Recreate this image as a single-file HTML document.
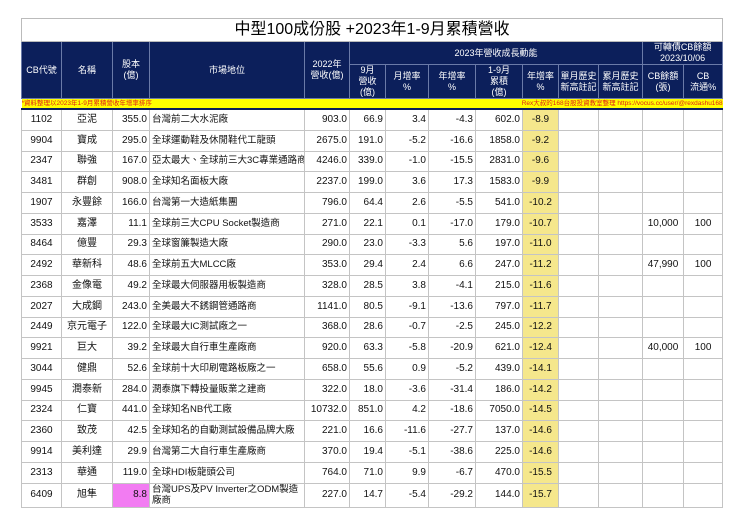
<!DOCTYPE html>
<html><head><meta charset="utf-8"><style>
body{margin:0;background:#fff;width:740px;height:523px;overflow:hidden;font-family:"Liberation Sans","Noto Sans CJK TC",sans-serif;}
table{position:absolute;left:21px;top:18px;border-collapse:collapse;table-layout:fixed;width:701px;}
td{padding:0;overflow:hidden;white-space:nowrap;vertical-align:middle;}
.t td{height:22px;border:1px solid #bbb;text-align:center;font-size:16px;line-height:18px;color:#000;}
.h td{background:#0c1f5b;color:#fff;text-align:center;font-size:9px;line-height:11px;border:1px solid #6a7aa8;}
.y td{background:#ffff00;height:9px;font-size:6.5px;line-height:9px;color:#e0201a;border:none;border-bottom:2px solid #0c1f5b;}
.d td{height:19.75px;border:1px solid #c4c4c4;font-size:10px;line-height:12px;color:#111;text-align:right;padding-right:2px;}
.d td.c{text-align:center;padding:0}
.d td.l{text-align:left;padding-left:2px;font-size:9.5px;}
.d td.hl{background:#f5e78c;text-align:center;padding:0}
</style></head><body>
<table>
<colgroup><col style="width:40px"><col style="width:51px"><col style="width:37px"><col style="width:155px"><col style="width:45px"><col style="width:36px"><col style="width:43px"><col style="width:47px"><col style="width:47px"><col style="width:36px"><col style="width:40px"><col style="width:44px"><col style="width:41px"><col style="width:39px"></colgroup>
<tr class="t"><td colspan="14">中型100成份股 +2023年1-9月累積營收</td></tr>
<tr class="h" style="height:23px"><td rowspan="2">CB代號</td><td rowspan="2">名稱</td><td rowspan="2">股本<br>(億)</td><td rowspan="2">市場地位</td><td rowspan="2">2022年<br>營收(億)</td><td colspan="7">2023年營收成長動能</td><td colspan="2">可轉債CB餘額<br>2023/10/06</td></tr>
<tr class="h" style="height:33px"><td>9月<br>營收<br>(億)</td><td>月增率<br>%</td><td>年增率<br>%</td><td>1-9月<br>累積<br>(億)</td><td>年增率<br>%</td><td>單月歷史<br>新高註記</td><td>累月歷史<br>新高註記</td><td>CB餘額<br>(張)</td><td>CB<br>流通%</td></tr>
<tr class="y"><td colspan="7" style="text-align:left">*資料整理以2023年1-9月累積營收年增率排序</td><td colspan="7" style="text-align:right">Rex大叔的168台股投資教室整理 https://vocus.cc/user/@rexdashu168</td></tr>
<tr class="d"><td class="c">1102</td><td class="c">亞泥</td><td>355.0</td><td class="l">台灣前二大水泥廠</td><td>903.0</td><td>66.9</td><td>3.4</td><td>-4.3</td><td>602.0</td><td class="hl">-8.9</td><td></td><td></td><td></td><td></td></tr>
<tr class="d"><td class="c">9904</td><td class="c">寶成</td><td>295.0</td><td class="l">全球運動鞋及休閒鞋代工龍頭</td><td>2675.0</td><td>191.0</td><td>-5.2</td><td>-16.6</td><td>1858.0</td><td class="hl">-9.2</td><td></td><td></td><td></td><td></td></tr>
<tr class="d"><td class="c">2347</td><td class="c">聯強</td><td>167.0</td><td class="l">亞太最大、全球前三大3C專業通路商</td><td>4246.0</td><td>339.0</td><td>-1.0</td><td>-15.5</td><td>2831.0</td><td class="hl">-9.6</td><td></td><td></td><td></td><td></td></tr>
<tr class="d"><td class="c">3481</td><td class="c">群創</td><td>908.0</td><td class="l">全球知名面板大廠</td><td>2237.0</td><td>199.0</td><td>3.6</td><td>17.3</td><td>1583.0</td><td class="hl">-9.9</td><td></td><td></td><td></td><td></td></tr>
<tr class="d"><td class="c">1907</td><td class="c">永豐餘</td><td>166.0</td><td class="l">台灣第一大造紙集團</td><td>796.0</td><td>64.4</td><td>2.6</td><td>-5.5</td><td>541.0</td><td class="hl">-10.2</td><td></td><td></td><td></td><td></td></tr>
<tr class="d"><td class="c">3533</td><td class="c">嘉澤</td><td>11.1</td><td class="l">全球前三大CPU Socket製造商</td><td>271.0</td><td>22.1</td><td>0.1</td><td>-17.0</td><td>179.0</td><td class="hl">-10.7</td><td></td><td></td><td class="c">10,000</td><td class="c">100</td></tr>
<tr class="d"><td class="c">8464</td><td class="c">億豐</td><td>29.3</td><td class="l">全球窗簾製造大廠</td><td>290.0</td><td>23.0</td><td>-3.3</td><td>5.6</td><td>197.0</td><td class="hl">-11.0</td><td></td><td></td><td></td><td></td></tr>
<tr class="d"><td class="c">2492</td><td class="c">華新科</td><td>48.6</td><td class="l">全球前五大MLCC廠</td><td>353.0</td><td>29.4</td><td>2.4</td><td>6.6</td><td>247.0</td><td class="hl">-11.2</td><td></td><td></td><td class="c">47,990</td><td class="c">100</td></tr>
<tr class="d"><td class="c">2368</td><td class="c">金像電</td><td>49.2</td><td class="l">全球最大伺服器用板製造商</td><td>328.0</td><td>28.5</td><td>3.8</td><td>-4.1</td><td>215.0</td><td class="hl">-11.6</td><td></td><td></td><td></td><td></td></tr>
<tr class="d"><td class="c">2027</td><td class="c">大成鋼</td><td>243.0</td><td class="l">全美最大不銹鋼管通路商</td><td>1141.0</td><td>80.5</td><td>-9.1</td><td>-13.6</td><td>797.0</td><td class="hl">-11.7</td><td></td><td></td><td></td><td></td></tr>
<tr class="d"><td class="c">2449</td><td class="c">京元電子</td><td>122.0</td><td class="l">全球最大IC測試廠之一</td><td>368.0</td><td>28.6</td><td>-0.7</td><td>-2.5</td><td>245.0</td><td class="hl">-12.2</td><td></td><td></td><td></td><td></td></tr>
<tr class="d"><td class="c">9921</td><td class="c">巨大</td><td>39.2</td><td class="l">全球最大自行車生產廠商</td><td>920.0</td><td>63.3</td><td>-5.8</td><td>-20.9</td><td>621.0</td><td class="hl">-12.4</td><td></td><td></td><td class="c">40,000</td><td class="c">100</td></tr>
<tr class="d"><td class="c">3044</td><td class="c">健鼎</td><td>52.6</td><td class="l">全球前十大印刷電路板廠之一</td><td>658.0</td><td>55.6</td><td>0.9</td><td>-5.2</td><td>439.0</td><td class="hl">-14.1</td><td></td><td></td><td></td><td></td></tr>
<tr class="d"><td class="c">9945</td><td class="c">潤泰新</td><td>284.0</td><td class="l">潤泰旗下轉投量販業之建商</td><td>322.0</td><td>18.0</td><td>-3.6</td><td>-31.4</td><td>186.0</td><td class="hl">-14.2</td><td></td><td></td><td></td><td></td></tr>
<tr class="d"><td class="c">2324</td><td class="c">仁寶</td><td>441.0</td><td class="l">全球知名NB代工廠</td><td>10732.0</td><td>851.0</td><td>4.2</td><td>-18.6</td><td>7050.0</td><td class="hl">-14.5</td><td></td><td></td><td></td><td></td></tr>
<tr class="d"><td class="c">2360</td><td class="c">致茂</td><td>42.5</td><td class="l">全球知名的自動測試設備品牌大廠</td><td>221.0</td><td>16.6</td><td>-11.6</td><td>-27.7</td><td>137.0</td><td class="hl">-14.6</td><td></td><td></td><td></td><td></td></tr>
<tr class="d"><td class="c">9914</td><td class="c">美利達</td><td>29.9</td><td class="l">台灣第二大自行車生產廠商</td><td>370.0</td><td>19.4</td><td>-5.1</td><td>-38.6</td><td>225.0</td><td class="hl">-14.6</td><td></td><td></td><td></td><td></td></tr>
<tr class="d"><td class="c">2313</td><td class="c">華通</td><td>119.0</td><td class="l">全球HDI板龍頭公司</td><td>764.0</td><td>71.0</td><td>9.9</td><td>-6.7</td><td>470.0</td><td class="hl">-15.5</td><td></td><td></td><td></td><td></td></tr>
<tr class="d"><td class="c" style="height:23px">6409</td><td class="c">旭隼</td><td style="background:#f27cf2">8.8</td><td class="l" style="white-space:normal;line-height:11px">台灣UPS及PV Inverter之ODM製造廠商</td><td>227.0</td><td>14.7</td><td>-5.4</td><td>-29.2</td><td>144.0</td><td class="hl">-15.7</td><td></td><td></td><td></td><td></td></tr>
</table>
</body></html>
